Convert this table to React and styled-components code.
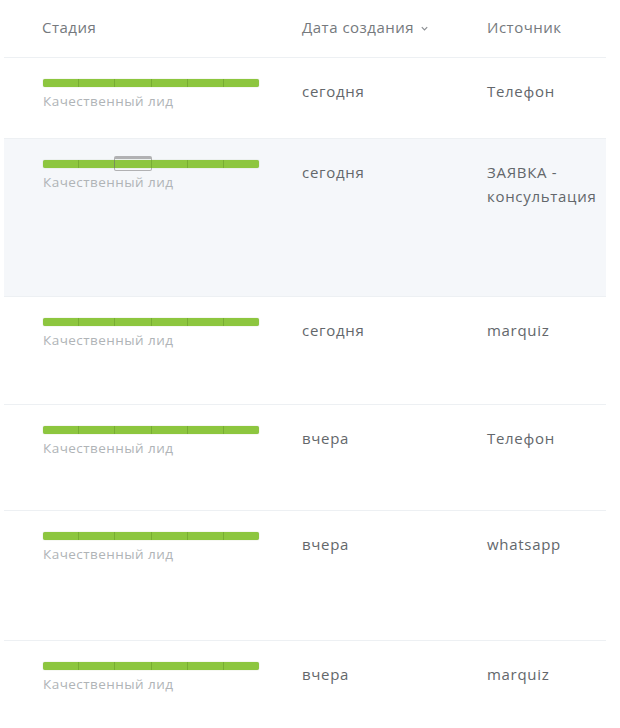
import React from 'react';
import styled, { createGlobalStyle } from 'styled-components';

const GlobalStyle = createGlobalStyle`
    body {
        margin: 0;
        background: #ffffff;
        font-family: "Open Sans", "Liberation Sans", sans-serif;
    }
`;

const Table = styled.div`
    margin-left: 4px;
    width: 602px;
`;

const Row = styled.div`
    display: grid;
    grid-template-columns: 298px 185px 1fr;
    min-height: ${props => props.$height}px;
    box-sizing: border-box;
    border-bottom: 1px solid #edf0f3;
    background: ${props => (props.$active ? '#f5f7fa' : '#ffffff')};
`;

const HeadCell = styled.div`
    padding: 15px 0 0 ${props => props.$indent || 0}px;
    font-size: 15px;
    line-height: 24px;
    letter-spacing: 0.5px;
    color: #75797d;
    display: flex;
    align-items: flex-start;
    gap: 6px;
`;

const Cell = styled.div`
    padding: 21px 6px 0 ${props => props.$indent || 0}px;
    font-size: 15px;
    line-height: 24px;
    letter-spacing: 0.7px;
    color: #63676b;
`;

const StageCell = styled.div`
    padding: 21px 0 0 39px;
`;

const Bar = styled.div`
    display: flex;
    width: 216px;
    height: 8px;
    border-radius: 2px;
    background: #8dc63f;
    box-shadow: 0 0 1px rgba(80, 120, 30, 0.5);
`;

const Segment = styled.div`
    flex: 1;
    position: relative;
    border-left: ${props => (props.$first ? 'none' : '1px solid #78ad33')};
`;

const HoverMark = styled.span`
    position: absolute;
    left: -1px;
    right: -1px;
    top: -4px;
    bottom: -3px;
    border: 1px solid rgba(120, 120, 120, 0.55);
    border-top-width: 3px;
    border-radius: 2px;
`;

const StageLabel = styled.div`
    margin-top: 4px;
    font-size: 13.5px;
    line-height: 20px;
    color: #b0b4b7;
    letter-spacing: 0.45px;
`;

const Chevron = () => (
    <svg width="9" height="9" viewBox="0 0 10 10" style={{ marginTop: 9 }}>
        <path d="M2 3.5 L5 6.5 L8 3.5" fill="none" stroke="#8a8e92" strokeWidth="1.3" />
    </svg>
);

const rows = [
    { date: 'сегодня', source: 'Телефон', height: 81 },
    { date: 'сегодня', source: 'ЗАЯВКА - консультация', height: 158, active: true, hover: 2 },
    { date: 'сегодня', source: 'marquiz', height: 108 },
    { date: 'вчера', source: 'Телефон', height: 106 },
    { date: 'вчера', source: 'whatsapp', height: 130 },
    { date: 'вчера', source: 'marquiz', height: 100 },
];

const StageBar = ({ hover }) => (
    <Bar>
        {[0, 1, 2, 3, 4, 5].map(i => (
            <Segment key={i} $first={i === 0}>
                {hover === i && <HoverMark />}
            </Segment>
        ))}
    </Bar>
);

const App = () => {
    return (
        <>
            <GlobalStyle />
            <Table>
                <Row $height={58}>
                    <HeadCell $indent={38}>Стадия</HeadCell>
                    <HeadCell>Дата создания <Chevron /></HeadCell>
                    <HeadCell>Источник</HeadCell>
                </Row>
                {rows.map((r, i) => (
                    <Row key={i} $height={r.height} $active={r.active}>
                        <StageCell>
                            <StageBar hover={r.hover} />
                            <StageLabel>Качественный лид</StageLabel>
                        </StageCell>
                        <Cell>{r.date}</Cell>
                        <Cell>{r.source}</Cell>
                    </Row>
                ))}
            </Table>
        </>
    );
};

export default App;
